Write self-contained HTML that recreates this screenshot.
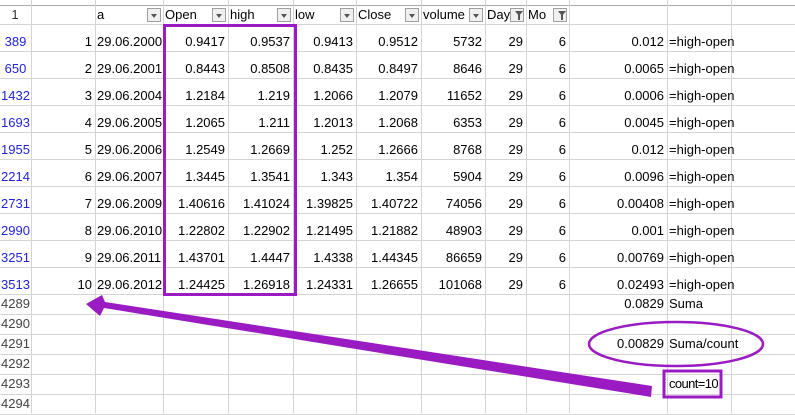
<!DOCTYPE html><html><head><style>
body{margin:0;width:795px;height:413px;overflow:hidden;background:#fff;font-family:"Liberation Sans",sans-serif;font-size:13px;color:#000;position:relative}
.c{position:absolute;white-space:nowrap;overflow:hidden;line-height:14px}
.r{text-align:right}
.vl{position:absolute;top:0;height:413px;width:1px;background:#d4d4d4}
.hl{position:absolute;left:0;width:795px;height:1px;background:#d4d4d4}
.dd{position:absolute;width:14px;height:14px;border:1px solid #a0a0a0;background:#f0f0f0;box-sizing:border-box}
.dd:after{content:"";position:absolute;left:3px;top:5px;border-left:3px solid transparent;border-right:3px solid transparent;border-top:4px solid #555}
.ff{position:absolute;width:14px;height:14px;border:1px solid #a0a0a0;background:#f0f0f0;box-sizing:border-box}
.ff:after{content:"";position:absolute;left:4px;top:2px;border-left:4px solid transparent;border-right:4px solid transparent;border-top:5px solid #555}
.ff:before{content:"";position:absolute;left:7px;top:6px;width:2px;height:5px;background:#555}
</style></head><body>
<div class="hl" style="top:5px;background:#aaa"></div>
<div id="g"></div>
<script>
var xs=[31,95,163,228,293,356,421,485,526,569,667,731];
var h='';xs.forEach(function(x){h+='<div class="vl" style="left:'+x+'px"></div>'});
var ys=[24];for(var i=1;i<=10;i++)ys.push(24+27*i);for(var i=1;i<=6;i++)ys.push(294+20*i);
ys.forEach(function(y){h+='<div class="hl" style="top:'+y+'px"></div>'});
function cell(x1,x2,y,t,cls,st){h+='<div class="c '+(cls||'')+'" style="left:'+(x1+2)+'px;width:'+(x2-x1-5)+'px;top:'+(y-7)+'px;'+(st||'')+'">'+t+'</div>';}
cell(0,31,15,'1','','text-align:center;color:#333');
var hd=['a','Open','high','low','Close','volume','Day','Mo'];
for(var i=0;i<8;i++){cell(xs[i+1],xs[i+2],15,hd[i]);h+='<div class="'+(i>=6?'ff':'dd')+'" style="left:'+(xs[i+2]-16)+'px;top:8px"></div>';}
var d=[['389',1,'29.06.2000','0.9417','0.9537','0.9413','0.9512','5732','0.012'],
['650',2,'29.06.2001','0.8443','0.8508','0.8435','0.8497','8646','0.0065'],
['1432',3,'29.06.2004','1.2184','1.219','1.2066','1.2079','11652','0.0006'],
['1693',4,'29.06.2005','1.2065','1.211','1.2013','1.2068','6353','0.0045'],
['1955',5,'29.06.2006','1.2549','1.2669','1.252','1.2666','8768','0.012'],
['2214',6,'29.06.2007','1.3445','1.3541','1.343','1.354','5904','0.0096'],
['2731',7,'29.06.2009','1.40616','1.41024','1.39825','1.40722','74056','0.00408'],
['2990',8,'29.06.2010','1.22802','1.22902','1.21495','1.21882','48903','0.001'],
['3251',9,'29.06.2011','1.43701','1.4447','1.4338','1.44345','86659','0.00769'],
['3513',10,'29.06.2012','1.24425','1.26918','1.24331','1.26655','101068','0.02493']];
d.forEach(function(r,i){var y=42+27*i;
cell(0,31,y,r[0],'','text-align:center;color:#2222dd;overflow:visible;left:0;width:31px');
cell(31,95,y,r[1],'r');cell(95,163,y,r[2],'','overflow:visible');
for(var k=0;k<4;k++)cell(xs[2+k],xs[3+k],y,r[3+k],'r');
cell(421,485,y,r[7],'r');cell(485,526,y,'29','r');cell(526,569,y,'6','r');
cell(569,667,y,r[8],'r');cell(667,731,y,'=high-open','','overflow:visible');});
['4289','4290','4291','4292','4293','4294'].forEach(function(n,i){cell(0,31,304+20*i,n,'','left:0;width:31px;text-align:center;color:#444;overflow:visible');});
cell(569,667,304,'0.0829','r');cell(667,731,304,'Suma','','overflow:visible');
cell(569,667,344,'0.00829','r');cell(667,731,344,'Suma/count','','overflow:visible');
cell(667,731,384,'count=10','','overflow:visible;letter-spacing:-0.6px');
document.getElementById('g').innerHTML=h;
</script>
<svg width="795" height="413" style="position:absolute;left:0;top:0">
<rect x="164.5" y="25.5" width="131" height="269" fill="none" stroke="#9b1bc2" stroke-width="3"/>
<ellipse cx="676" cy="344" rx="87" ry="22" fill="none" stroke="#9b1bc2" stroke-width="2.5"/>
<rect x="664" y="371" width="57" height="26" fill="none" stroke="#9b1bc2" stroke-width="3"/>
<polygon points="652,386 651,397 104,308 100,316 86,304 102,295 105,302" fill="#9b1bc2"/>
</svg>
</body></html>
